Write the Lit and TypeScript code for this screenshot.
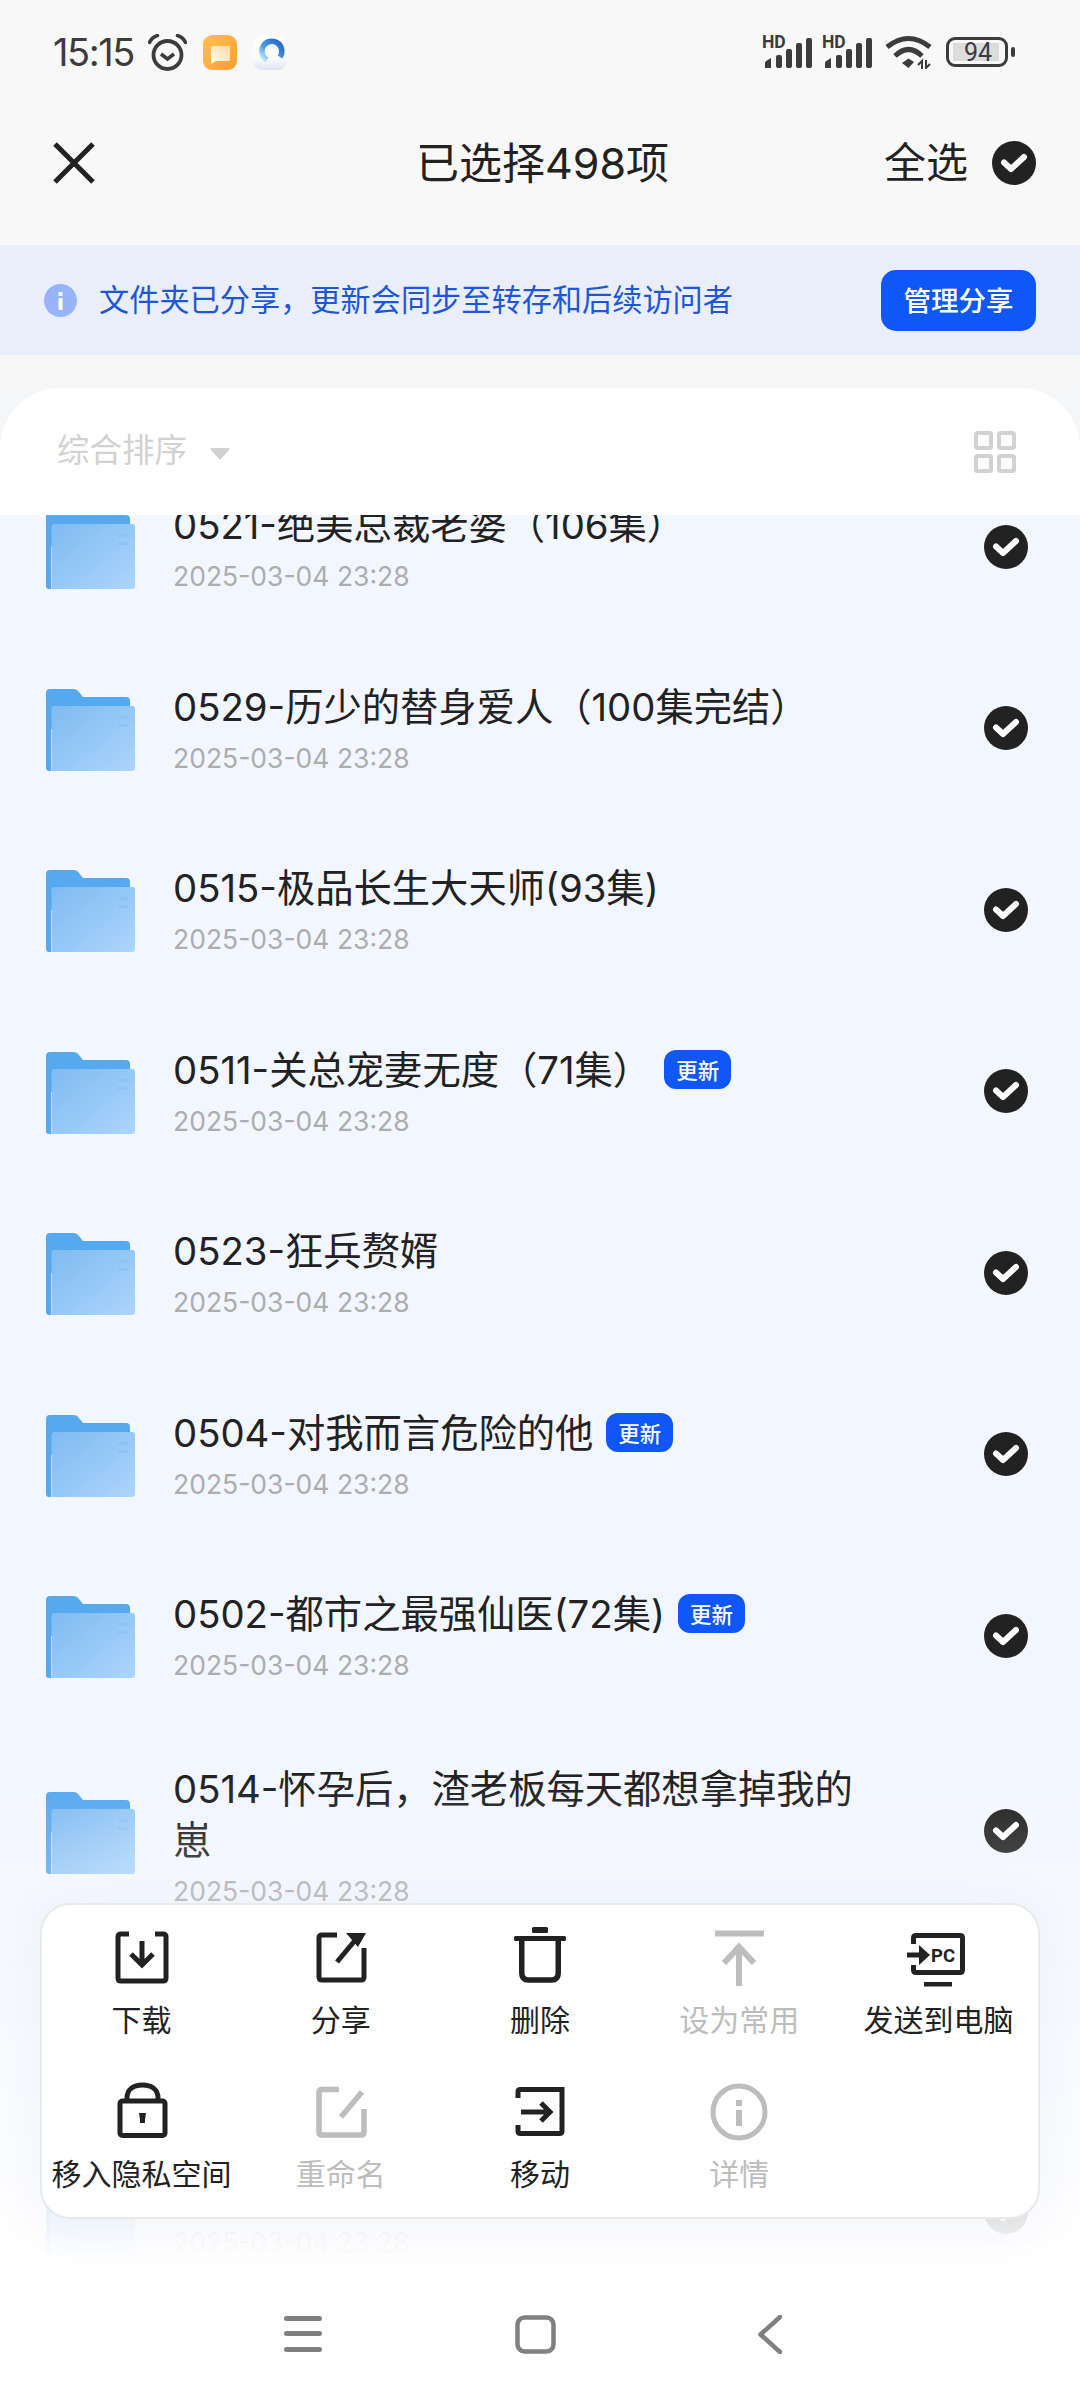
import { LitElement, html, css, svg, nothing } from "lit";
import { customElement } from "lit/decorators.js";

type Row = { title: string; date: boolean; badge?: boolean; kind?: string };

const rows: Row[] = [
  { title: "0521-绝美总裁老婆（106集）", date: true },
  { title: "0529-历少的替身爱人（100集完结）", date: true },
  { title: "0515-极品长生大天师(93集)", date: true },
  { title: "0511-关总宠妻无度（71集）", date: true, badge: true },
  { title: "0523-狂兵赘婿", date: true },
  { title: "0504-对我而言危险的他", date: true, badge: true },
  { title: "0502-都市之最强仙医(72集)", date: true, badge: true },
  { title: "0514-怀孕后，渣老板每天都想拿掉我的崽", date: true, kind: "tall" },
  { title: "", date: false, kind: "mid" },
  { title: "", date: true },
];

const folder = svg`<svg class="folder" width="90" height="82" viewBox="0 0 90 82">
  <defs><linearGradient id="fg" x1="0" y1="0" x2="1" y2="1">
    <stop offset="0" stop-color="#7fbbf1"/><stop offset="1" stop-color="#acd5fb"/></linearGradient></defs>
  <path d="M4 0H28q3 0 5 3l4 5H80q4 0 4 4V40H5V82H3q-3 0-3-3V4q0-4 4-4Z" fill="#57a9ef"/>
  <path d="M5.500 20q0-3 3-3H86q3 0 3 3V79q0 3-3 3H5.500Z" fill="url(#fg)"/>
  <rect x="72" y="27" width="10" height="3" fill="#8fc3f0"/><rect x="72" y="35" width="10" height="3" fill="#8fc3f0"/>
</svg>`;

const check = svg`<svg class="check" width="44" height="44" viewBox="0 0 44 44">
  <circle cx="22" cy="22" r="22" fill="#222"/>
  <path d="M12 21.500 19 28 32 16" fill="none" stroke="#fff" stroke-width="6" stroke-linecap="round" stroke-linejoin="round"/>
</svg>`;

const signal = svg`<svg class="sig" width="50" height="40" viewBox="0 -6 50 40">
  <text x="0" y="13" font-family="Roboto" font-weight="700" font-size="17.500" fill="#3c3c3c">HD</text>
  <path d="M3 33V28q0-2 2-2.600L9 23V33Z" fill="#3c3c3c"/>
  <rect x="14" y="20" width="6" height="13" rx="2" fill="#3c3c3c"/>
  <rect x="24" y="14" width="6" height="19" rx="2" fill="#3c3c3c"/>
  <rect x="34" y="8" width="6" height="25" rx="2" fill="#3c3c3c"/>
  <rect x="44" y="3" width="6" height="30" rx="2" fill="#3c3c3c"/>
</svg>`;

const D = "#222";
const G = "#bdbdbd";
const ic = (c: string, body: unknown) => svg`<svg class="aicon" width="64" height="64" viewBox="0 0 64 64" fill="none" stroke=${c} stroke-width="4.500">${body}</svg>`;

const actions = [
  { label: "下载", off: false, icon: ic(D, svg`
    <path d="M19 9H11q-3 0-3 3V53q0 3 3 3H53q3 0 3-3V12q0-3-3-3H45" stroke-width="5"/>
    <path d="M32 16V41M21 29 32 40 43 29" stroke-width="5"/>`) },
  { label: "分享", off: false, icon: ic(D, svg`
    <path d="M28 10H13q-3 0-3 3V52q0 3 3 3H52q3 0 3-3V23" stroke-width="5"/>
    <path d="M28 37 48 13" stroke-width="5"/><polygon points="37,8 57,8 49,22" fill=${D} stroke="none"/>`) },
  { label: "删除", off: false, icon: ic(D, svg`
    <rect x="6" y="11" width="52" height="5" rx="1.500" fill=${D} stroke="none"/>
    <rect x="24" y="2" width="16" height="6" rx="1.500" fill=${D} stroke="none"/>
    <path d="M13.750 14V48q0 7 7 7H43.250q7 0 7-7V14" stroke-width="5.500"/>`) },
  { label: "设为常用", off: true, icon: ic(G, svg`
    <path d="M8 8.500H57" stroke-width="6"/>
    <path d="M32 61V22M17 38 32 22 47 38" stroke-width="6"/>`) },
  { label: "发送到电脑", off: false, icon: ic(D, svg`
    <path d="M7.500 19V13q0-2.500 2.500-2.500H54q2.500 0 2.500 2.500V45q0 2.500-2.500 2.500H10q-2.500 0-2.500-2.500V40" stroke-width="5"/>
    <path d="M1 30H15" stroke-width="5"/><polygon points="13,20 24,30 13,40" fill=${D} stroke="none"/>
    <rect x="18" y="57" width="28" height="4.500" fill=${D} stroke="none"/>
    <text x="25" y="37" font-family="Roboto" font-weight="700" font-size="18.500" fill=${D} stroke="none">PC</text>`) },
  { label: "移入隐私空间", off: false, icon: ic(D, svg`
    <rect x="10" y="22" width="45" height="34.500" rx="2.500" stroke-width="5"/>
    <path d="M17 22V19C17 10 24 6 32.500 6S48 10 48 19V22" stroke-width="5"/>
    <path d="M29 34H36L35 41V44H30V41Z" fill=${D} stroke="none"/>`) },
  { label: "重命名", off: true, icon: ic(G, svg`
    <path d="M30 10.500H13q-3 0-3 3V53q0 3 3 3H52q3 0 3-3V30" stroke-width="5.500"/>
    <path d="M32 38 53 13" stroke-width="5.500"/>`) },
  { label: "移动", off: false, icon: ic(D, svg`
    <path d="M10 19V13q0-2.500 2.500-2.500H54V52q0 2.500-2.500 2.500H12.500Q10 54.500 10 52V46" stroke-width="5"/>
    <path d="M13 33H41M33 24 42 33 33 42" stroke-width="5"/>`) },
  { label: "详情", off: true, icon: ic(G, svg`
    <circle cx="32" cy="33" r="26" stroke-width="5"/>
    <rect x="29" y="21" width="6" height="6" fill=${G} stroke="none"/>
    <rect x="29" y="31" width="6" height="16" fill=${G} stroke="none"/>`) },
];

@customElement("app-root")
export class AppRoot extends LitElement {
  static styles = css`
    :host { display: block; width: 1080px; height: 2400px; font-family: Inter, "Noto Sans CJK SC", sans-serif; }
    .page { position: relative; width: 1080px; height: 2400px; overflow: hidden; display: flex; flex-direction: column; background: #f8f8f8; }
    svg { display: block; flex: none; }

    .status { height: 81px; box-sizing: border-box; padding: 28px 44px 5px 53px; display: flex; align-items: flex-start; flex: none; }
    .time { font: 400 38px/48px Inter, sans-serif; letter-spacing: -1.400px; color: #3c3c3c; width: 79px; white-space: nowrap; }
    .status-left { display: flex; align-items: center; gap: 16px; height: 48px; }
    .status-right { margin-left: auto; display: flex; align-items: center; gap: 10px; height: 48px; margin-right: 21px; }
    .sig { margin-top: -6px; }
    .wifi { margin-left: 3px; margin-right: 4px; }

    .toolbar { height: 164px; flex: none; display: grid; grid-template-columns: 1fr auto 1fr; align-items: center; padding: 0 44px 0 53px; }
    .title { text-align: center; font-size: 43px; color: #222; line-height: 60px; white-space: nowrap; margin-left: -4px; }
    .tool-right { display: flex; align-items: center; justify-content: flex-end; }
    .all { font-size: 42px; color: #222; margin-right: 24px; line-height: 60px; }

    .banner { height: 110px; flex: none; background: #eaeefa; display: flex; align-items: center; padding: 0 44px; color: #1d57d8; font-size: 30.200px; }
    .banner-text { margin-left: 22px; flex: 1; white-space: nowrap; padding-bottom: 5px; }
    .btn { width: 155px; height: 61px; box-sizing: border-box; padding-bottom: 3px; background: #0f57f6; color: #fff; border-radius: 15px; font-size: 27.500px; font-weight: 500; display: flex; align-items: center; justify-content: center; }

    .gap { height: 33px; flex: none; background: #f6f6f7; }
    .sheet-wrap { background: #f5f6f8; flex: none; }
    .sheet { height: 127px; box-sizing: border-box; background: #fff; border-radius: 60px 60px 0 0; display: flex; align-items: center; padding: 0 64px 0 57px; }
    .sort { font-size: 32.500px; color: #d2d2d2; margin-top: -8px; }
    .tri { margin-left: 23px; margin-top: 4px; }
    .grid-ic { margin-left: auto; }

    .list { flex: 1; position: relative; overflow: hidden; background: #f2f6ff; }
    .rows { margin-top: -58.600px; }
    .row { height: 181.500px; box-sizing: border-box; border-bottom: 1px solid #f8f9ff; display: flex; align-items: center; padding: 0 52px 0 46px; }
    .row.tall { height: 210px; }
    .row.mid { height: 185px; }
    .folder { margin-top: 3px; }
    .text { flex: 1; margin-left: 37px; min-width: 0; padding-top: 8px; }
    .tall .text { padding-top: 17px; }
    .name { max-width: 700px; font-size: 38.300px; line-height: 51px; min-height: 51px; color: #222; }
    .name-line { display: flex; align-items: center; }
    .badge { margin-left: 13px; width: 67px; height: 39px; border-radius: 12px; background: #0f57f6; color: #fff; font-size: 21.500px; font-weight: 500; display: flex; align-items: center; justify-content: center; margin-top: -2px; flex: none; }
    .date { font-size: 26.500px; line-height: 50px; min-height: 50px; color: #adadad; }
    .fade { position: absolute; left: 0; right: 0; top: 1265px; bottom: 0; background: linear-gradient(to bottom, rgba(255,255,255,0), #fff); pointer-events: none; }

    .nav { height: 130px; flex: none; background: #fff; box-sizing: border-box; padding: 45px 0 0 284px; display: flex; align-items: flex-start; }
    .nav .sq { margin-left: 193px; }
    .nav .bk { margin-left: 202px; }

    .panel { position: absolute; left: 40px; top: 1903px; width: 1000px; box-sizing: border-box; height: 316px; background: #fff; border: 2px solid #e9e9e9; border-radius: 30px; box-shadow: 0 6px 60px rgba(40,60,110,.05); padding-top: 20px; display: grid; grid-template-columns: repeat(5, 1fr); grid-auto-rows: 154px; }
    .action { display: flex; flex-direction: column; align-items: center; font-size: 30px; color: #222; }
    .action.off { color: #bdbdbd; }
    .action span { margin-top: 11px; line-height: 40px; white-space: nowrap; }
  `;

  render() {
    return html`<div class="page">
      <div class="status">
        <div class="status-left">
          <div class="time">15:15</div>
          <svg width="39" height="37" viewBox="0 0 39 37" fill="none" stroke="#3c3c3c">
            <circle cx="19.500" cy="21" r="14" stroke-width="3.800"/>
            <path d="M13 20 19.500 25 26 20" stroke-width="3.500"/>
            <path d="M1.500 8.500C3 5 6 2.500 9.500 1.500M37.500 8.500C36 5 33 2.500 29.500 1.500" stroke-width="3.500" stroke-linecap="round"/>
          </svg>
          <svg width="34" height="35" viewBox="0 0 34 35">
            <defs><linearGradient id="og" x1="0" y1="0" x2="1" y2="1"><stop offset="0" stop-color="#ffc250"/><stop offset="1" stop-color="#ff9c35"/></linearGradient>
            <linearGradient id="ow" x1="0" y1="1" x2="1" y2="0"><stop offset="0" stop-color="#fff"/><stop offset="1" stop-color="#ffd79e"/></linearGradient></defs>
            <rect width="34" height="35" rx="9" fill="url(#og)"/>
            <path d="M8 29V13q0-2 2-2H27V12L8 29Zm0 0 19-17V24q0 2-2 2H13Z" fill="url(#ow)"/>
          </svg>
          <svg width="34" height="35" viewBox="0 0 34 35">
            <defs><linearGradient id="bg" x1="0" y1="0" x2="0" y2="1"><stop offset="0" stop-color="#fff"/><stop offset=".7" stop-color="#f8f9fd"/><stop offset="1" stop-color="#dfe3f1"/></linearGradient>
            <linearGradient id="br" x1="1" y1="0" x2="0" y2="1"><stop offset="0" stop-color="#2561c5"/><stop offset=".6" stop-color="#4b9de8"/><stop offset="1" stop-color="#d8ecfb"/></linearGradient></defs>
            <rect width="34" height="35" rx="9" fill="url(#bg)"/>
            <path d="M27 22A10 10 0 1 0 14 25" fill="none" stroke="url(#br)" stroke-width="5.500"/>
          </svg>
        </div>
        <div class="status-right">
          ${signal}${signal}
          <svg class="wifi" width="47" height="34" viewBox="0 0 47 34" fill="none" stroke="#3c3c3c">
            <path d="M2 12Q23.500-5 45 12" stroke-width="5"/>
            <path d="M10 21Q23.500 8 37 21" stroke-width="5"/>
            <polygon points="17,28 23.500,23.500 29,27 23.500,33" fill="#3c3c3c" stroke="none"/>
            <path d="M37 34V26l-4 4M41 25v8l4-4" stroke-width="2"/>
          </svg>
          <svg width="69" height="30" viewBox="0 0 69 30">
            <rect x="1.500" y="1.500" width="59" height="27" rx="7.500" fill="none" stroke="#3c3c3c" stroke-width="3"/>
            <rect x="7" y="6" width="46" height="18" fill="#dcdcdc"/>
            <rect x="65" y="10" width="4" height="10" rx="2" fill="#3c3c3c"/>
            <text x="32" y="24" text-anchor="middle" font-family="Roboto" font-size="25" fill="#3c3c3c">94</text>
          </svg>
        </div>
      </div>

      <div class="toolbar">
        <svg width="42" height="42" viewBox="0 0 42 42"><path d="M2 2 40 40M40 2 2 40" stroke="#222" stroke-width="5" fill="none"/></svg>
        <div class="title">已选择498项</div>
        <div class="tool-right"><div class="all">全选</div>${check}</div>
      </div>

      <div class="banner">
        <svg width="33" height="33" viewBox="0 0 33 33"><circle cx="16.500" cy="16.500" r="16.500" fill="#97b4fb"/><rect x="14.500" y="8" width="4" height="4" fill="#fff"/><rect x="14.500" y="14" width="4" height="12" fill="#fff"/></svg>
        <div class="banner-text">文件夹已分享，更新会同步至转存和后续访问者</div>
        <div class="btn">管理分享</div>
      </div>
      <div class="gap"></div>

      <div class="sheet-wrap"><div class="sheet">
        <div class="sort">综合排序</div>
        <svg class="tri" width="20" height="14" viewBox="0 0 20 14"><path d="M2 1H18q2 0 1 2L11 12q-1 1.500-2 0L1 3Q0 1 2 1Z" fill="#d2d2d2"/></svg>
        <svg class="grid-ic" width="42" height="42" viewBox="0 0 42 42" fill="none" stroke="#d2d2d2" stroke-width="4">
          <rect x="2" y="2" width="15" height="15" rx="1.500"/><rect x="25" y="2" width="15" height="15" rx="1.500"/>
          <rect x="2" y="25" width="15" height="15" rx="1.500"/><rect x="25" y="25" width="15" height="15" rx="1.500"/>
        </svg>
      </div></div>

      <div class="list">
        <div class="rows">
          ${rows.map((r) => html`<div class="row ${r.kind ?? ""}">
            ${folder}
            <div class="text">
              <div class="name-line">
                <div class="name">${r.title}</div>
                ${r.badge ? html`<div class="badge">更新</div>` : nothing}
              </div>
              <div class="date">${r.date ? "2025-03-04 23:28" : ""}</div>
            </div>
            ${check}
          </div>`)}
        </div>
        <div class="fade"></div>
      </div>

      <div class="nav">
        <svg width="38" height="38" viewBox="0 0 38 38" fill="#808080"><rect y="1" width="38" height="5" rx="2.500"/><rect y="16" width="38" height="5" rx="2.500"/><rect y="32" width="38" height="5" rx="2.500"/></svg>
        <svg class="sq" width="41" height="39" viewBox="0 0 41 39"><rect x="2.500" y="2.500" width="36" height="34" rx="7" fill="none" stroke="#808080" stroke-width="4.500"/></svg>
        <svg class="bk" width="24" height="39" viewBox="0 0 24 39"><path d="M22 2 2.500 19.500 22 37" fill="none" stroke="#808080" stroke-width="4.500" stroke-linecap="round" stroke-linejoin="round"/></svg>
      </div>

      <div class="panel">
        ${actions.map((a) => html`<div class="action ${a.off ? "off" : ""}">${a.icon}<span>${a.label}</span></div>`)}
      </div>
    </div>`;
  }
}
